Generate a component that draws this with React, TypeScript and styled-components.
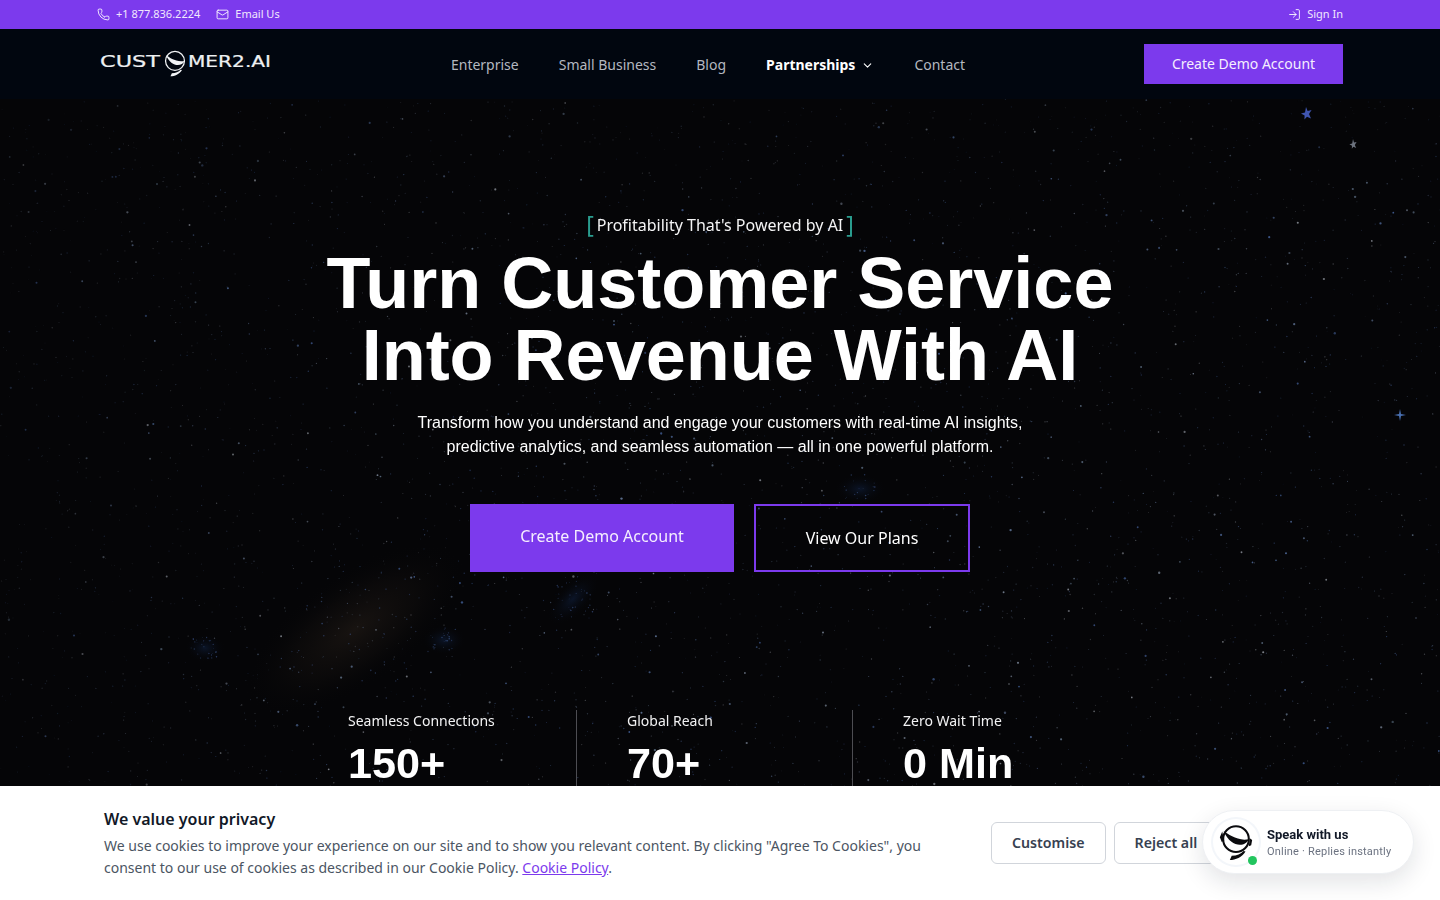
import React, { useMemo } from "react";
import styled, { createGlobalStyle } from "styled-components";
import { ChevronDown, LogIn, Mail, Phone } from "lucide-react";

const GlobalStyle = createGlobalStyle`
  html, body {
    margin: 0;
    padding: 0;
    height: 100%;
    overflow: hidden;
    background: #050507;
    font-family: "Noto Sans", sans-serif;
  }
  * { box-sizing: border-box; }
`;

const NAV_LINKS = ["Enterprise", "Small Business", "Blog", "Partnerships", "Contact"];

const STATS = [
  { label: "Seamless Connections", value: "150+" },
  { label: "Global Reach", value: "70+" },
  { label: "Zero Wait Time", value: "0 Min" },
];

// little seeded generator so the sky is the same on every load
const makeRandom = (seed: number) => () => {
  seed = (seed * 1664525 + 1013904223) % 4294967296;
  return seed / 4294967296;
};

const STAR_COLORS = ["#6f86ad", "#5a78ae", "#8793a6", "#4c6cab", "#9a9fa8", "#65788f"];

const Starfield: React.FC = () => {
  const stars = useMemo(() => {
    const rand = makeRandom(42);
    const list: { x: number; y: number; r: number; fill: string; o: number }[] = [];
    for (let i = 0; i < 4200; i++) {
      const big = rand() > 0.92;
      const x = rand() * 1440;
      const y = rand() * 720;
      // the left edge and the top of the sky are visibly emptier than the rest
      const fadeX = x < 320 ? 0.5 + (x / 320) * 0.5 : 1;
      const fadeY = y < 120 ? 0.55 + (y / 120) * 0.45 : 1;
      list.push({
        x,
        y,
        r: big ? 0.8 + rand() * 0.4 : 0.4 + rand() * 0.35,
        fill: STAR_COLORS[Math.floor(rand() * STAR_COLORS.length)],
        o: ((big ? 0.5 : 0.2) + rand() * 0.3) * fadeX * fadeY,
      });
    }
    // denser patches inside the blue clusters
    const clusters = [
      [205, 648, 12, 26],
      [444, 640, 12, 22],
      [573, 600, 20, 36],
      [350, 630, 70, 50],
      [480, 530, 60, 30],
      [860, 490, 16, 20],
    ];
    clusters.forEach(([cx, cy, sx, n]) => {
      for (let i = 0; i < n; i++) {
        list.push({
          x: cx + (rand() - 0.5) * sx * 2,
          y: cy - 99 + (rand() - 0.5) * sx * 2,
          r: 0.4 + rand() * 0.4,
          fill: "#4f70b4",
          o: 0.25 + rand() * 0.3,
        });
      }
    });
    return list;
  }, []);

  return (
    <Sky viewBox="0 0 1440 801" aria-hidden="true">
      <defs>
        <radialGradient id="dust">
          <stop offset="0%" stopColor="#1a1512" stopOpacity="0.9" />
          <stop offset="55%" stopColor="#120f0e" stopOpacity="0.45" />
          <stop offset="100%" stopColor="#050507" stopOpacity="0" />
        </radialGradient>
        <radialGradient id="cloud">
          <stop offset="0%" stopColor="#0d1a33" stopOpacity="0.75" />
          <stop offset="100%" stopColor="#050507" stopOpacity="0" />
        </radialGradient>
        <filter id="soft" x="0" y="0" width="100%" height="100%">
          <feGaussianBlur stdDeviation="0.45" />
        </filter>
      </defs>
      <ellipse cx="355" cy="530" rx="130" ry="56" fill="url(#dust)" transform="rotate(-35 355 530)" />
      <ellipse cx="573" cy="500" rx="34" ry="16" fill="url(#cloud)" transform="rotate(-45 573 500)" />
      <ellipse cx="444" cy="541" rx="22" ry="15" fill="url(#cloud)" />
      <ellipse cx="205" cy="549" rx="20" ry="14" fill="url(#cloud)" />
      <ellipse cx="860" cy="390" rx="26" ry="15" fill="url(#cloud)" />
      <g filter="url(#soft)">
        {stars.map((s, i) => (
          <circle key={i} cx={s.x.toFixed(1)} cy={s.y.toFixed(1)} r={s.r.toFixed(2)} fill={s.fill} opacity={s.o.toFixed(2)} />
        ))}
        <path d="M1306 8l1.600 4 4-1-2.600 4 2 4.400-4-1.600-2.600 2.600.2-4-3.600-2 4-1z" fill="#3f55b0" />
        <path d="M1353 40l1 3.400 2.600-.4-1.800 3 1.400 3-2.800-1.200-1.600 2 .2-3-2.600-1.600 2.800-.8z" fill="#6d737e" />
        <path d="M1400 310l1 5 5 1-5 1-1 5-1-5-5-1 5-1z" fill="#4a6fb0" />
      </g>
    </Sky>
  );
};

// shared mark: the ring with a crescent and a mic tail, used in the logo and the chat avatar
const HeadsetMark: React.FC<{ size: number; color: string; cups?: boolean }> = ({ size, color, cups }) => (
  <svg width={size} height={size} viewBox="0 0 40 40" aria-hidden="true">
    <circle cx="20" cy="17" r="13.500" fill="none" stroke={color} strokeWidth={cups ? 2.2 : 1.8} />
    <path d="M7 8.500C12 12 22 19.500 33.500 17C30 25.500 14.500 26.500 7 8.500z" fill={color} />
    {cups && <path d="M5.500 9l-2.500 6 2 5 2.500-1.500zM34.500 16l2.500 2-1 5.500-2.500 1z" fill={color} />}
    <path d="M28 29.500c-3 3.500-7 4.800-12.500 5l-2 4.500c6 0 13-3 16.500-9z" fill={color} />
  </svg>
);

const Logo: React.FC = () => (
  <LogoBox>
    <LogoWord viewBox="0 0 171 16" width={171} height={16}>
      <text x="0" y="13" textLength="60" lengthAdjust="spacingAndGlyphs">CUST</text>
      <text x="88" y="13" textLength="83" lengthAdjust="spacingAndGlyphs">MER2.AI</text>
    </LogoWord>
    <LogoMark>
      <HeadsetMark size={28} color="#f2f4f6" />
    </LogoMark>
  </LogoBox>
);

export default function App() {
  return (
    <>
      <GlobalStyle />
      <Page>
        <TopBar>
          <TopGroup>
            <TopLink>
              <Phone size={13} strokeWidth={1.6} />
              +1 877.836.2224
            </TopLink>
            <TopLink>
              <Mail size={13} strokeWidth={1.6} />
              Email Us
            </TopLink>
          </TopGroup>
          <TopLink>
            <LogIn size={13} strokeWidth={1.6} />
            Sign In
          </TopLink>
        </TopBar>

        <NavBar>
          <Logo />
          <NavLinks>
            {NAV_LINKS.map((link) => (
              <NavLink key={link} $active={link === "Partnerships"}>
                {link}
                {link === "Partnerships" && <ChevronDown size={13} strokeWidth={2} />}
              </NavLink>
            ))}
          </NavLinks>
          <NavButton>Create Demo Account</NavButton>
        </NavBar>

        <Hero>
          <Starfield />
          <Tagline>
            <Bracket>[</Bracket>
            Profitability That's Powered by AI
            <Bracket>]</Bracket>
          </Tagline>
          <Headline>
            Turn Customer Service
            <br />
            Into Revenue With AI
          </Headline>
          <Lead>
            Transform how you understand and engage your customers with real-time AI insights,
            <br />
            predictive analytics, and seamless automation — all in one powerful platform.
          </Lead>
          <Actions>
            <PrimaryButton>Create Demo Account</PrimaryButton>
            <OutlineButton>View Our Plans</OutlineButton>
          </Actions>
          <Stats>
            {STATS.map((stat) => (
              <Stat key={stat.label}>
                <StatLabel>{stat.label}</StatLabel>
                <StatValue>{stat.value}</StatValue>
              </Stat>
            ))}
          </Stats>
        </Hero>
      </Page>

      <CookieBanner>
        <CookieCopy>
          <CookieTitle>We value your privacy</CookieTitle>
          <CookieText>
            We use cookies to improve your experience on our site and to show you relevant content. By clicking "Agree To Cookies", you
            <br />
            consent to our use of cookies as described in our Cookie Policy. <CookieLink href="#">Cookie Policy</CookieLink>.
          </CookieText>
        </CookieCopy>
        <CookieButtons>
          <CookieButton>Customise</CookieButton>
          <CookieButton>Reject all</CookieButton>
        </CookieButtons>
      </CookieBanner>

      <ChatWidget>
        <ChatAvatar>
          <HeadsetMark size={38} color="#0b0b0e" cups />
          <OnlineDot />
        </ChatAvatar>
        <ChatCopy>
          <ChatTitle>Speak with us</ChatTitle>
          <ChatStatus>Online · Replies instantly</ChatStatus>
        </ChatCopy>
      </ChatWidget>
    </>
  );
}

const Page = styled.div`
  display: flex;
  flex-direction: column;
  height: 900px;
  overflow: hidden;
`;

const TopBar = styled.div`
  flex: none;
  height: 29px;
  padding: 0 97px 2px;
  background: #7c3aed;
  display: flex;
  align-items: center;
  justify-content: space-between;
`;

const TopGroup = styled.div`
  display: flex;
  gap: 16px;
`;

const TopLink = styled.a`
  display: flex;
  align-items: center;
  gap: 6px;
  font-size: 11px;
  color: #f1e8fd;
  svg {
    color: #ffffff;
    margin-top: 1px;
  }
`;

const NavBar = styled.nav`
  flex: none;
  height: 70px;
  padding: 0 97px 0 100px;
  background: #01060f;
  display: flex;
  align-items: center;
  justify-content: space-between;
  position: relative;
  z-index: 2;
`;

const LogoBox = styled.div`
  position: relative;
  width: 171px;
  height: 16px;
  margin-top: -5px;
`;

const LogoWord = styled.svg`
  display: block;
  text {
    font-family: "DejaVu Sans", sans-serif;
    font-size: 15px;
    fill: #eef0f2;
    stroke: #eef0f2;
    stroke-width: 0.2px;
  }
`;

const LogoMark = styled.div`
  position: absolute;
  left: 61px;
  top: -5px;
  line-height: 0;
`;

const NavLinks = styled.div`
  display: flex;
  align-items: center;
  gap: 40px;
  margin-left: 1px;
  padding-top: 2px;
`;

const NavLink = styled.a<{ $active?: boolean }>`
  display: flex;
  align-items: center;
  gap: 5px;
  font-size: 14px;
  font-weight: ${({ $active }) => ($active ? 700 : 400)};
  color: ${({ $active }) => ($active ? "#ffffff" : "#b4b8c0")};
  line-height: 20px;
  svg {
    margin-left: 1px;
  }
`;

const NavButton = styled.button`
  width: 199px;
  height: 40px;
  padding: 0 0 2px;
  border: 0;
  background: #7c3aed;
  color: #f5eefe;
  font: 400 14px "Noto Sans", sans-serif;
`;

const Hero = styled.section`
  position: relative;
  flex: 1;
  background: #050507;
  padding-top: 114px;
  display: flex;
  flex-direction: column;
  align-items: center;
  color: #ffffff;
  > *:not(svg) {
    position: relative;
  }
`;

const Sky = styled.svg`
  position: absolute;
  inset: 0;
  width: 1440px;
  height: 801px;
`;

const Tagline = styled.div`
  display: flex;
  align-items: center;
  height: 24px;
  font-size: 16px;
  color: #f4f4f5;
`;

const Bracket = styled.span`
  font-size: 23px;
  font-weight: 400;
  color: #2a9d8f;
  margin: -3px 3px 0;
  line-height: 24px;
`;

const Headline = styled.h1`
  margin: 10px 0 0;
  font: 700 72px/72px "Liberation Sans", Arial, sans-serif;
  text-align: center;
  color: #ffffff;
`;

const Lead = styled.p`
  margin: 20px 0 0;
  font: 400 16px/24px "Liberation Sans", Arial, sans-serif;
  text-align: center;
  color: #ffffff;
`;

const Actions = styled.div`
  display: flex;
  gap: 20px;
  margin-top: 45px;
`;

const PrimaryButton = styled.button`
  width: 264px;
  height: 68px;
  padding: 0 0 4px;
  border: 0;
  background: #7c3aed;
  color: #f5eefe;
  font: 400 16px "Noto Sans", sans-serif;
`;

const OutlineButton = styled.button`
  width: 216px;
  height: 68px;
  border: 2px solid #7c3aed;
  background: transparent;
  color: #ffffff;
  font: 400 16px "Noto Sans", sans-serif;
`;

const Stats = styled.div`
  display: grid;
  grid-template-columns: 228px 276px 240px;
  margin-top: 138px;
`;

const Stat = styled.div`
  height: 110px;
  & + & {
    padding-left: 50px;
    border-left: 1px solid #4d4d52;
  }
`;

const StatLabel = styled.div`
  padding-top: 1px;
  font-size: 14px;
  line-height: 20px;
  color: #f2f2f3;
`;

const StatValue = styled.div`
  margin-top: 8px;
  font: 700 43.2px/48px "Liberation Sans", Arial, sans-serif;
  color: #ffffff;
`;

const CookieBanner = styled.div`
  position: fixed;
  left: 0;
  right: 0;
  bottom: 0;
  height: 114px;
  padding: 22px 0 0 104px;
  background: #ffffff;
  display: flex;
  z-index: 5;
`;

const CookieCopy = styled.div`
  width: 887px;
  flex: none;
`;

const CookieTitle = styled.div`
  font-size: 16px;
  font-weight: 600;
  line-height: 22px;
  color: #111827;
`;

const CookieText = styled.p`
  margin: 5px 0 0;
  font-size: 14px;
  line-height: 22px;
  color: #4b5563;
  white-space: nowrap;
`;

const CookieLink = styled.a`
  color: #7c3aed;
  text-decoration: underline;
`;

const CookieButtons = styled.div`
  display: flex;
  gap: 8px;
  height: 42px;
  margin-top: 14px;
`;

const CookieButton = styled.button`
  height: 42px;
  padding: 0 20px 2px;
  border: 1px solid #d1d5db;
  border-radius: 6px;
  background: #ffffff;
  color: #374151;
  font: 600 14.2px "Noto Sans", sans-serif;
`;

const ChatWidget = styled.div`
  position: fixed;
  right: 26px;
  bottom: 26px;
  width: 212px;
  height: 64px;
  padding: 0 10px;
  border: 1px solid #eef0f3;
  border-radius: 32px;
  background: #ffffff;
  box-shadow: 0 8px 24px rgba(17, 24, 39, 0.12);
  display: flex;
  align-items: center;
  gap: 8px;
  z-index: 6;
`;

const ChatAvatar = styled.div`
  position: relative;
  flex: none;
  width: 46px;
  height: 46px;
  border-radius: 50%;
  background: #ffffff;
  box-shadow: 0 0 0 2px #f3f6fa;
  display: flex;
  align-items: center;
  justify-content: center;
`;

const OnlineDot = styled.span`
  position: absolute;
  right: 2px;
  bottom: 0;
  width: 9px;
  height: 9px;
  border-radius: 50%;
  background: #22c55e;
`;

const ChatCopy = styled.div`
  display: flex;
  flex-direction: column;
  gap: 1px;
  margin-top: 2px;
`;

const ChatTitle = styled.div`
  font: 700 13px/16px Roboto, sans-serif;
  color: #111827;
`;

const ChatStatus = styled.div`
  font: 400 11px/16px Roboto, sans-serif;
  color: #6b7280;
  letter-spacing: 0.2px;
`;
